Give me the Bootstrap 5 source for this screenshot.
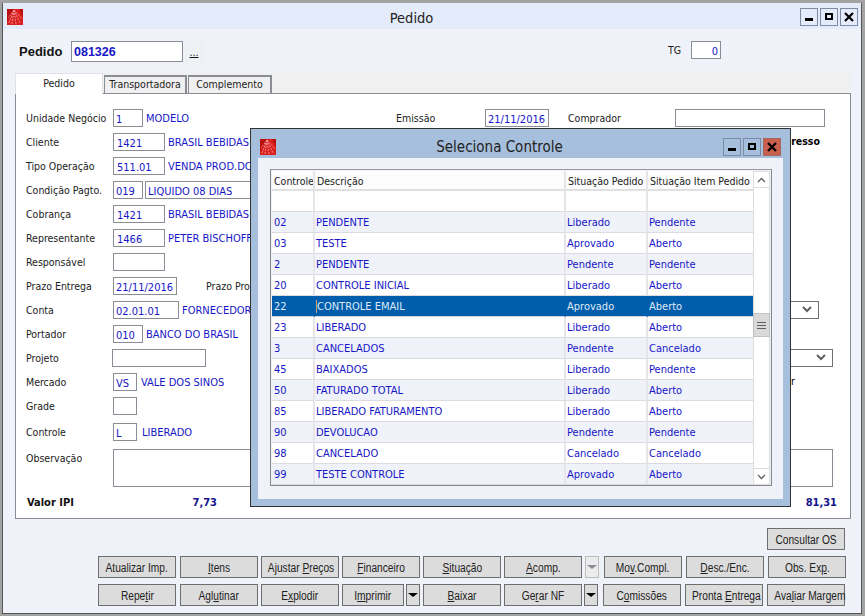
<!DOCTYPE html>
<html lang="pt-BR">
<head>
<meta charset="utf-8">
<title>Pedido</title>
<link href="https://cdn.jsdelivr.net/npm/bootstrap@5.3.0/dist/css/bootstrap.min.css" rel="stylesheet">
<style>
html,body{margin:0;height:100%;background:#a5a5a5;overflow:hidden}
body,.btn,.form-control,.table{font-family:"DejaVu Sans Condensed","DejaVu Sans",Tahoma,sans-serif;font-size:10.5px}
.janela{position:relative;width:865px;height:616px;padding:3px 0 0 2px;background:#a3a3a3;color:#222}
.miolo{height:611px;width:860px;border:1px solid #555;border-top:0;background:#f0f2f9;display:flex;flex-direction:column}
.barra{height:26px;flex:none;background:#e4ecfb;display:flex;align-items:center;padding:2px 3px 0 4px;position:relative}
.titulo{flex:1;text-align:center;font-size:14.5px;padding-top:4px;color:#222}
.logo{width:16px;height:16px;flex:none;display:block}
.ctrls{display:flex;gap:2px}
.ctrl{width:18px;height:18px;border:1px solid #7d8ba3;display:flex;align-items:center;justify-content:center;background:transparent}
.ctrl.fim{background:#c9604f;border-color:#a9685c}
.ctrl svg{display:block}
.cab{height:44px;flex:none;display:flex;align-items:flex-start;padding:12px 0 0 16px;position:relative}
.cab-rot{font-family:"Liberation Sans",sans-serif;font-weight:700;font-size:13px;width:52px;line-height:21px;color:#111}
.form-control.campo{width:30px;height:18px;min-height:0;padding:2px 2px 0;border:1px solid #8a8d95;border-radius:0;font-size:11px;line-height:14px;color:#1616c8;background:#fff;flex:none;box-shadow:none}
.form-control.p3{padding-left:3px}
.form-control.num-ped{width:112px;height:21px;font-family:"Liberation Sans",sans-serif;font-weight:700;font-size:12.5px;line-height:19px;padding:0 2px}
.reticencia{width:18px;height:22px;margin-left:2px;background:#eff0f3;text-align:center;line-height:22px;text-decoration:underline;color:#111}
.tg{margin-left:465px;display:flex;align-items:center;height:18px;gap:10px}
.tg span{margin-top:2px}
.form-control.campo-tg{text-align:right}
.w24{width:24px!important}.w30{width:30px!important}.w52{width:52px!important}.w64{width:64px!important}.w66{width:66px!important}.w94{width:94px!important}.w150{width:150px!important}.w130{width:130px!important}
.abas{height:20px;flex:none;margin:0 10px 0 12px;width:836px;background:#f0f0f0;display:flex;align-items:flex-end;border:0;gap:1px;flex-wrap:nowrap;position:relative;z-index:1}
.abas .nav-link{height:18px;padding:0;border:1px solid #8a8d95;border-bottom:0;border-width:2px 2px 1px 1px;border-radius:0;background:#f0f0f0;color:#222;text-align:center;font-size:10.5px;line-height:15px;margin:0}
.abas .nav-link.active{height:21px;margin-bottom:-1px;background:#fff;color:#222;border-width:1px 1px 0 1px;line-height:18px;position:relative}
.aba1{width:88px}.aba2{width:83px}.aba3{width:84px}
.painel{width:836px;height:426px;margin-left:12px;flex:none;border:1px solid #8a8d95;background:#fff;padding:12px 17px 0 10px;display:flex;flex-direction:column}
.lin{height:24px;flex:none;display:flex;align-items:center}
.lin.l26{height:26px;padding-top:2px}
.rot{width:87px;flex:none;margin-top:2px}
.val{color:#1616c8;margin-left:3px;margin-top:2px;white-space:nowrap;font-size:11px}
.v4{margin-left:4px}.v5{margin-left:5px}
.gap2{margin-left:2px}
.recuo{margin-left:-1px}
.sub-rot{margin-left:29px;margin-top:2px}
.dir{margin-left:auto;width:437px;display:flex;align-items:center;padding-right:8px}
.dir .r1{width:89px;margin-top:2px}
.dir .r2{margin-left:19px;width:107px;margin-top:2px}
.impresso{margin-left:auto;margin-right:13px;font-weight:700;color:#000}
.fim-r{margin-left:auto;margin-right:38px;color:#000}
.form-select.sel{height:18px;min-height:0;padding:0;border:1px solid #707070;border-radius:0;margin-left:auto;background-size:10px 8px;background-position:right 6px center;box-shadow:none;background-color:#fff;background-image:url("data:image/svg+xml,%3csvg xmlns='http://www.w3.org/2000/svg' viewBox='0 0 10 8'%3e%3cpath fill='none' stroke='%23606060' stroke-width='2' d='M1 1l4 4 4-4'/%3e%3c/svg%3e")}
.sel.s1{margin-right:14px}
.obs{height:38px;align-items:flex-start;display:flex;margin-top:5px}
.obs .rot{line-height:14px;margin-top:2px}
.form-control.area{flex:1;width:auto;height:38px;resize:none;padding:0}
.total{display:flex;align-items:center;height:16px;margin-top:8px;font-weight:700;font-size:11px;color:#111}
.total .t-rot{width:130px;padding-left:1px}
.total .t-val{width:61px;text-align:right;color:#14148c}
.total .t-fim{margin-left:auto;color:#14148c;margin-right:-4px}
.botoes{flex:1;position:relative;padding:9px 0 0 95px;display:flex;flex-direction:column;gap:6px}
.lb{display:flex;gap:3px;height:22px}
.lb.topo{justify-content:flex-end;padding-right:16px}
.btn.bw{width:78px;height:22px;padding:1px 0 0;border:1px solid #6e6e6e;border-radius:0;background:#dcdcdc;color:#222;font-family:"Liberation Sans",sans-serif;font-size:12px;line-height:18px;white-space:nowrap;flex:none}
.estreito{display:inline-block;transform:scaleX(.85)}
.btn.sm{width:14px;display:flex;align-items:center;justify-content:center;padding:0}
.btn.sm.off{background:#ececec;border-color:#bdbdbd;opacity:1}
.btn.sm.off i{border-top-color:#8a8f98}
.btn.sm i{display:block;width:0;height:0;border:5px solid transparent;border-bottom:0;border-top:4px solid #000}
.btn.w62{width:62px}
.par{display:flex;justify-content:space-between;width:78px}
.mr1{margin-right:1px}.mr2{margin-right:2px}.ml-1{margin-left:-1px}
.btn u{text-underline-offset:1px}
.dialogo{position:absolute;left:250px;top:128px;width:541px;height:379px;background:#a6bfdc;border:1px solid #333;display:flex;flex-direction:column;z-index:5}
.dlg-barra{height:29px;flex:none;display:flex;align-items:center;padding:7px 9px 0 9px}
.dlg-tit{flex:1;text-align:center;font-size:15px;padding-left:0;color:#222}
.dlg-corpo{flex:1;margin:0 7px 7px 7px;background:#f0f2f9;padding:11px 10px 0 12px}
.grade{width:502px;height:317px;border:1px solid #888;border-top-color:#999;padding:1px 0 0 1px;display:flex;background:#f0f2f9}
.table.tab-grade{width:481px;table-layout:fixed;margin:0;font-size:11px;--bs-table-bg:transparent;flex:none;border-collapse:separate;border-spacing:0;height:314px}
.tab-grade th,.tab-grade td{padding:2px 0 0 1px;height:21px;border:0;border-right:2px solid #e6e6ea;border-bottom:1px solid #dcdce0;font-weight:400;color:#1616c8;white-space:nowrap;overflow:hidden;font-size:11px;line-height:14px;box-shadow:none;background:#fff;vertical-align:middle}
.tab-grade th{height:20px;color:#222;background:#fcfcfc;border-bottom:2px solid #e0e0e0;font-size:10.5px;padding-left:2px}
.tab-grade td:first-child{padding-left:2px}
.tab-grade tr.zz td{background:#f0f2f9}
.tab-grade tr.ativo td{background:#005dac;color:#dfeaf6;border-right-color:#005dac;border-bottom-color:#d8d8dc}
.tab-grade tr>*:last-child{border-right:0}
.c1{width:43px}.c2{width:251px}.c3{width:82px}.c4{width:105px}
.cursor-i{border-left:1px solid #c9a36a}
.rolagem{width:17px;flex:none;height:314px;background:#fff;border:1px solid #dcdcdc;display:flex;flex-direction:column;position:relative}
.seta{height:16px;background:#fff;border-bottom:1px solid #dcdcdc;display:flex;align-items:center;justify-content:center;flex:none}
.seta.baixo{margin-top:auto;border-bottom:0;border-top:1px solid #dcdcdc}
.polegar{position:absolute;left:-1px;right:-1px;top:141px;height:24px;background:#d9d9d9;border:1px solid #c2c2c2;display:flex;align-items:center;justify-content:center}
.polegar svg,.seta svg{display:block}
</style>
</head>
<body>
<div class="janela">
  <div class="miolo">
    <div class="barra">
      <svg class="logo" viewBox="0 0 16 16"><rect width="16" height="16" fill="#b80f0f"/><path d="M0 13L7 0h5l4 8v8H0z" fill="#dc2020"/><path d="M7 1L1 9M7 1L2 14M7 1L5 15M7 1L9 15M7 1L13 14M7 1L15 10" stroke="#f4a6a6" stroke-width=".8" stroke-dasharray="2 1" fill="none"/></svg>
      <div class="titulo">Pedido</div>
      <div class="ctrls">
        <div class="ctrl"><svg width="10" height="10" viewBox="0 0 10 10"><rect x="1" y="6" width="8" height="3" fill="#000"/></svg></div>
        <div class="ctrl"><svg width="10" height="10" viewBox="0 0 10 10"><path d="M1 1h8v7H1zM3 3v3h4V3z" fill="#000" fill-rule="evenodd"/></svg></div>
        <div class="ctrl"><svg width="10" height="10" viewBox="0 0 10 10"><path d="M1 1l8 8M9 1L1 9" stroke="#000" stroke-width="2.2"/></svg></div>
      </div>
    </div>
    <div class="cab">
      <div class="cab-rot">Pedido</div>
      <input class="form-control campo num-ped" value="081326">
      <div class="reticencia">...</div>
      <div class="tg"><span>TG</span><input class="form-control campo campo-tg" value="0"></div>
    </div>
    <ul class="nav nav-tabs abas">
      <li class="nav-item"><a class="nav-link active aba1" href="#">Pedido</a></li>
      <li class="nav-item"><a class="nav-link aba2" href="#">Transportadora</a></li>
      <li class="nav-item"><a class="nav-link aba3" href="#">Complemento</a></li>
    </ul>
    <div class="painel">
      <div class="lin"><span class="rot">Unidade Negócio</span><input class="form-control campo w30" value="1"><span class="val">MODELO</span>
        <div class="dir"><span class="r1">Emissão</span><input class="form-control campo w64" value="21/11/2016"><span class="r2">Comprador</span><input class="form-control campo w150"></div></div>
      <div class="lin"><span class="rot">Cliente</span><input class="form-control campo p3 w52" value="1421"><span class="val">BRASIL BEBIDAS</span><span class="impresso">Impresso</span></div>
      <div class="lin"><span class="rot">Tipo Operação</span><input class="form-control campo p3 w52" value="511.01"><span class="val">VENDA PROD.DO</span></div>
      <div class="lin"><span class="rot">Condição Pagto.</span><input class="form-control campo w30" value="019"><input class="form-control campo w130 gap2" value="LIQUIDO 08 DIAS"></div>
      <div class="lin"><span class="rot">Cobrança</span><input class="form-control campo p3 w52" value="1421"><span class="val">BRASIL BEBIDAS</span></div>
      <div class="lin"><span class="rot">Representante</span><input class="form-control campo p3 w52" value="1466"><span class="val">PETER BISCHOFF</span></div>
      <div class="lin"><span class="rot">Responsável</span><input class="form-control campo w52"></div>
      <div class="lin"><span class="rot">Prazo Entrega</span><input class="form-control campo w64" value="21/11/2016"><span class="sub-rot">Prazo Pro</span></div>
      <div class="lin"><span class="rot">Conta</span><input class="form-control campo w66" value="02.01.01"><span class="val">FORNECEDOR</span><select class="form-select sel s1 w130" aria-label="Seleção 1"></select></div>
      <div class="lin"><span class="rot">Portador</span><input class="form-control campo w30" value="010"><span class="val">BANCO DO BRASIL</span></div>
      <div class="lin"><span class="rot">Projeto</span><input class="form-control campo w94 recuo" value=""><select class="form-select sel w130" aria-label="Seleção 2"></select></div>
      <div class="lin"><span class="rot">Mercado</span><input class="form-control campo w24" value="VS"><span class="val v4">VALE DOS SINOS</span><span class="fim-r">r</span></div>
      <div class="lin"><span class="rot">Grade</span><input class="form-control campo w24"></div>
      <div class="lin l26"><span class="rot">Controle</span><input class="form-control campo w24" value="L"><span class="val v5">LIBERADO</span></div>
      <div class="obs"><span class="rot">Observação</span><textarea class="form-control campo area"></textarea></div>
      <div class="total"><span class="t-rot">Valor IPI</span><span class="t-val">7,73</span><span class="t-fim">81,31</span></div>
    </div>
    <div class="botoes">
      <div class="lb topo"><button class="btn bw"><span class="estreito">Consultar OS</span></button></div>
      <div class="lb">
        <button class="btn bw mr1"><span class="estreito">Atualizar Imp.</span></button>
        <button class="btn bw"><span class="estreito"><u>I</u>tens</span></button>
        <button class="btn bw"><span class="estreito">Ajustar <u>P</u>reços</span></button>
        <button class="btn bw"><span class="estreito"><u>F</u>inanceiro</span></button>
        <button class="btn bw"><span class="estreito"><u>S</u>ituação</span></button>
        <button class="btn bw"><span class="estreito"><u>A</u>comp.</span></button>
        <button class="btn bw sm off mr2" disabled aria-label="Mais"><i></i></button>
        <button class="btn bw mr1"><span class="estreito">Mo<u>v</u>.Compl.</span></button>
        <button class="btn bw mr1"><span class="estreito"><u>D</u>esc./Enc.</span></button>
        <button class="btn bw"><span class="estreito">Obs. Ex<u>p</u>.</span></button>
      </div>
      <div class="lb">
        <button class="btn bw mr1"><span class="estreito">Repe<u>t</u>ir</span></button>
        <button class="btn bw"><span class="estreito">Agl<u>u</u>tinar</span></button>
        <button class="btn bw"><span class="estreito">E<u>x</u>plodir</span></button>
        <div class="par"><button class="btn bw w62"><span class="estreito">I<u>m</u>primir</span></button><button class="btn bw sm" aria-label="Mais"><i></i></button></div>
        <button class="btn bw"><span class="estreito"><u>B</u>aixar</span></button>
        <button class="btn bw"><span class="estreito">Ge<u>r</u>ar NF</span></button>
        <button class="btn bw sm mr2 ml-1" aria-label="Mais"><i></i></button>
        <button class="btn bw mr1"><span class="estreito">C<u>o</u>missões</span></button>
        <button class="btn bw mr1"><span class="estreito">Pronta <u>E</u>ntrega</span></button>
        <button class="btn bw"><span class="estreito">Ava<u>l</u>iar Margem</span></button>
      </div>
    </div>
  </div>

  <div class="dialogo">
    <div class="dlg-barra">
      <svg class="logo" viewBox="0 0 16 16"><rect width="16" height="16" fill="#b80f0f"/><path d="M0 13L7 0h5l4 8v8H0z" fill="#dc2020"/><path d="M7 1L1 9M7 1L2 14M7 1L5 15M7 1L9 15M7 1L13 14M7 1L15 10" stroke="#f4a6a6" stroke-width=".8" stroke-dasharray="2 1" fill="none"/></svg>
      <div class="dlg-tit">Seleciona Controle</div>
      <div class="ctrls">
        <div class="ctrl"><svg width="10" height="10" viewBox="0 0 10 10"><rect x="1" y="6" width="8" height="3" fill="#000"/></svg></div>
        <div class="ctrl"><svg width="10" height="10" viewBox="0 0 10 10"><path d="M1 1h8v7H1zM3 3v3h4V3z" fill="#000" fill-rule="evenodd"/></svg></div>
        <div class="ctrl fim"><svg width="10" height="10" viewBox="0 0 10 10"><path d="M1 1l8 8M9 1L1 9" stroke="#000" stroke-width="2.2"/></svg></div>
      </div>
    </div>
    <div class="dlg-corpo">
      <div class="grade">
        <table class="table tab-grade">
          <colgroup><col class="c1"><col class="c2"><col class="c3"><col class="c4"></colgroup>
          <thead><tr><th>Controle</th><th>Descrição</th><th>Situação Pedido</th><th>Situação Item Pedido</th></tr></thead>
          <tbody>
            <tr><td></td><td></td><td></td><td></td></tr>
            <tr class="zz"><td>02</td><td>PENDENTE</td><td>Liberado</td><td>Pendente</td></tr>
            <tr><td>03</td><td>TESTE</td><td>Aprovado</td><td>Aberto</td></tr>
            <tr class="zz"><td>2</td><td>PENDENTE</td><td>Pendente</td><td>Pendente</td></tr>
            <tr><td>20</td><td>CONTROLE INICIAL</td><td>Liberado</td><td>Aberto</td></tr>
            <tr class="ativo"><td>22</td><td><span class="cursor-i">CONTROLE EMAIL</span></td><td>Aprovado</td><td>Aberto</td></tr>
            <tr><td>23</td><td>LIBERADO</td><td>Liberado</td><td>Aberto</td></tr>
            <tr class="zz"><td>3</td><td>CANCELADOS</td><td>Pendente</td><td>Cancelado</td></tr>
            <tr><td>45</td><td>BAIXADOS</td><td>Liberado</td><td>Pendente</td></tr>
            <tr class="zz"><td>50</td><td>FATURADO TOTAL</td><td>Liberado</td><td>Aberto</td></tr>
            <tr><td>85</td><td>LIBERADO FATURAMENTO</td><td>Liberado</td><td>Aberto</td></tr>
            <tr class="zz"><td>90</td><td>DEVOLUCAO</td><td>Pendente</td><td>Pendente</td></tr>
            <tr><td>98</td><td>CANCELADO</td><td>Cancelado</td><td>Cancelado</td></tr>
            <tr class="zz"><td>99</td><td>TESTE CONTROLE</td><td>Aprovado</td><td>Aberto</td></tr>
          </tbody>
        </table>
        <div class="rolagem">
          <div class="seta"><svg width="9" height="6" viewBox="0 0 9 6"><path d="M1 5l3.500-3.500L8 5" fill="none" stroke="#606060" stroke-width="1.300"/></svg></div>
          <div class="polegar"><svg width="9" height="7" viewBox="0 0 9 7"><path d="M0 .5h9M0 3.500h9M0 6.500h9" stroke="#606060"/></svg></div>
          <div class="seta baixo"><svg width="9" height="6" viewBox="0 0 9 6"><path d="M1 1l3.500 3.500L8 1" fill="none" stroke="#606060" stroke-width="1.300"/></svg></div>
        </div>
      </div>
    </div>
  </div>
</div>
<script src="https://cdn.jsdelivr.net/npm/bootstrap@5.3.0/dist/js/bootstrap.bundle.min.js"></script>
</body>
</html>
